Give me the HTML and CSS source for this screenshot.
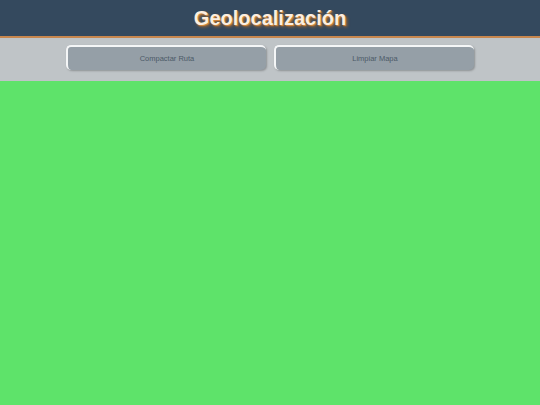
FILE: index.html
```html
<!DOCTYPE html>
<html>
<head>
<meta charset="utf-8">
<link rel="stylesheet" href="styles.css">
</head>
<body>
<header class="header"><h1 class="title">Geolocalización</h1></header>
<div class="toolbar">
  <button class="btn">Compactar Ruta</button>
  <button class="btn">Limpiar Mapa</button>
</div>
<div class="map"></div>
</body>
</html>
```
FILE: styles.css
```css
html, body { margin: 0; padding: 0; height: 100%; }
body { font-family: "Liberation Sans", Arial, sans-serif; display: flex; flex-direction: column; background: #5ee36a; }
.header { background: #34495e; height: 36px; border-bottom: 2px solid #c8874e; display: flex; align-items: center; justify-content: center; }
.title { margin: 0; font-size: 20px; font-weight: bold; color: #fbeee0; text-shadow: 1px 1px 1px #d98b3c, 2px 2px 3px #a0652e; }
.toolbar { background: #bfc4c7; height: 43px; display: flex; justify-content: center; align-items: flex-start; gap: 8px; padding-top: 7px; box-sizing: border-box; }
.btn { width: 200px; height: 25px; background: #959fa7; border: none; border-top: 2px solid #f4f6f7; border-left: 2px solid #f4f6f7; border-radius: 5px; box-shadow: 1px 1px 2px rgba(0,0,0,0.25); color: #4c5a68; font-family: "Liberation Sans", Arial, sans-serif; font-size: 7.5px; padding: 0; }
.map { flex: 1; background: #5ee36a; }
```
